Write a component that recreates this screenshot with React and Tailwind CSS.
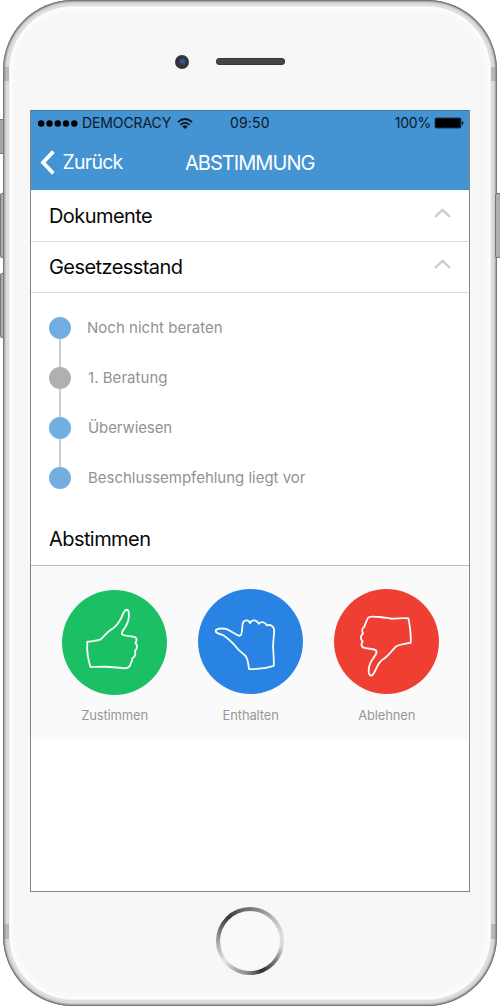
import React from "react";

const stages = [
  { label: "Noch nicht beraten", dot: "bg-[#72aedf]", text: "ml-[16px] tracking-[0.02px]" },
  { label: "1. Beratung", dot: "bg-[#b0b0b0]", text: "ml-[17px] tracking-[0.04px]" },
  { label: "Überwiesen", dot: "bg-[#72aedf]", text: "ml-[17px] tracking-[-0.1px]" },
  { label: "Beschlussempfehlung liegt vor", dot: "bg-[#72aedf]", text: "ml-[17px] tracking-[-0.02px]" },
];

const votes = [
  {
    label: "Zustimmen",
    color: "bg-[#1bc064]",
    box: "mt-[1px]",
    viewBox: "38 29 313 313",
    d: "M114 184 C130 182 142 182 154 177 C168 163 177 150 192 143 C207 133 216 113 223 96 C228 86 236 85 238 96 C240 111 237 125 228 139 C221 150 213 158 219 163 C229 168 244 166 257 170 C263 173 262 183 258 188 C265 195 264 205 257 211 C259 221 256 230 249 233 C250 241 244 246 243 252 C240 262 234 265 220 263 C196 261 179 258 158 259 C145 260 134 259 123 259 C117 239 112 205 114 184 Z",
  },
  {
    label: "Enthalten",
    color: "bg-[#2983e3]",
    box: "mt-0",
    viewBox: "40 26 313 313",
    d: "M93 151 C94 145 108 143 121 145 C138 149 151 164 164 166 C174 165 171 149 173 137 C173 124 177 120 185 120 C191 120 194 123 196 128 C201 117 215 117 222 130 C230 122 242 125 246 135 C255 132 267 136 268 148 C269 165 264 181 265 202 C266 221 268 239 267 256 C243 264 218 267 193 266 C190 251 190 232 181 225 C166 214 155 203 146 190 C135 179 130 174 118 166 C107 160 91 160 93 151 Z",
  },
  {
    label: "Ablehnen",
    color: "bg-[#ee3f32]",
    box: "mt-0",
    viewBox: "43 26 313 313",
    d: "M266 114 C270 135 274 161 273 187 C257 190 241 191 229 198 C213 214 203 229 188 238 C173 248 169 269 161 280 C156 289 148 286 147 275 C146 258 151 246 160 234 C167 223 175 216 168 209 C157 204 143 206 130 201 C123 197 125 187 129 183 C122 177 121 165 130 160 C126 152 127 143 134 139 C136 131 137 130 142 119 C144 109 151 108 165 109 C184 109 200 113 216 115 C235 115 250 112 266 114 Z",
  },
];

function Wifi() {
  return (
    <svg className="ml-[6px] h-[11px] w-[16px] shrink-0" viewBox="0 0 16 11" fill="none" stroke="#071521" strokeWidth="1.7">
      <path d="M.9 4.1Q8-2.1 15.1 4.1" />
      <path d="M3.4 6.8Q8 2.9 12.6 6.8" />
      <path d="M5.3 8.5Q8 6.2 10.7 8.5L8 11Z" fill="#071521" stroke="none" />
    </svg>
  );
}

function StatusBar() {
  return (
    <div className="flex h-[24px] items-center pl-[7px] pr-[5px] text-[14px] leading-none text-[#0b1a27]">
      <svg className="h-[7px] w-[40px] shrink-0" viewBox="0 0 40 7" fill="#000">
        <circle cx="3.2" cy="3.5" r="3.2" />
        <circle cx="11.5" cy="3.5" r="3.2" />
        <circle cx="19.8" cy="3.5" r="3.2" />
        <circle cx="28" cy="3.5" r="3.2" />
        <circle cx="36.3" cy="3.5" r="3.2" />
      </svg>
      <span className="ml-[4px] w-[89px] tracking-[-0.1px]">DEMOCRACY</span>
      <Wifi />
      <span className="ml-[37px] tracking-[0.15px]">09:50</span>
      <span className="ml-auto tracking-[-0.2px]">100%</span>
      <svg className="ml-[3px] h-[12px] w-[30px] shrink-0" viewBox="0 0 30 12">
        <rect x=".5" y=".5" width="27" height="11" rx="2" fill="#163a58" />
        <rect x="1.5" y="1.5" width="25" height="9" rx="1" fill="#000" />
        <path d="M28 4q1.5.5 1.5 2T28 8z" fill="#071521" />
      </svg>
    </div>
  );
}

function SectionRow({ title, className }) {
  return (
    <div className={"flex items-center justify-between px-[18px] text-[20px] leading-none text-[#080808] " + className}>
      <h2 className="tracking-[-0.57px]">{title}</h2>
      <svg className="mb-[6px] h-[10px] w-[17px]" viewBox="0 0 17 10" fill="none" stroke="#cbcbce" strokeWidth="2.3">
        <path d="M1 9L8.5 1.8L16 9" />
      </svg>
    </div>
  );
}

function Screen() {
  return (
    <div className="mx-[27px] flex h-[782px] flex-col border border-[#858585] bg-white">
      <header className="-mt-px h-[80px] shrink-0 border-t border-[#447299] bg-[#4493d3]">
        <StatusBar />
        <div className="flex h-[55px] items-center pl-[9px] text-[20px] leading-none text-white">
          <svg className="h-[25px] w-[15px]" viewBox="0 0 15 25" fill="none" stroke="white" strokeWidth="3.8">
            <path d="M13.3 1.6L3 12.5L13.3 23.4" />
          </svg>
          <span className="ml-[7.5px] w-[122.5px] text-[19.5px] tracking-[-0.75px]">Zurück</span>
          <h1 className="tracking-[-0.95px]">ABSTIMMUNG</h1>
        </div>
      </header>
      <SectionRow title="Dokumente" className="h-[52px] shrink-0 border-b border-[#dadada]" />
      <SectionRow title="Gesetzesstand" className="h-[51px] shrink-0 border-b border-[#d9d9d9]" />
      <ul className="flex h-[220px] shrink-0 flex-col pl-[18px] pt-[23.5px]">
        {stages.map((s, i) => (
          <li key={s.label} className="flex h-[50.3px] shrink-0 text-[15px] leading-[22px] text-[#929295]">
            <div className="flex w-[22px] flex-col items-center">
              <span className={"size-[22px] shrink-0 rounded-full " + s.dot} />
              {i < 3 && <span className="w-[1.5px] grow bg-[#cecece]" />}
            </div>
            <span className={s.text}>{s.label}</span>
          </li>
        ))}
      </ul>
      <h2 className="flex h-[53px] shrink-0 items-center border-b border-[#bdbdbd] pl-[18px] text-[20px] leading-none tracking-[-0.57px] text-[#080808]">
        Abstimmen
      </h2>
      <section className="flex h-[173px] shrink-0 justify-between bg-[#fafafa] pl-[31.3px] pr-[30px] pt-[23px]">
        {votes.map((v) => (
          <div key={v.label} className="flex h-[137px] w-[104.5px] flex-col items-center">
            <button className={"size-[104.5px] shrink-0 rounded-full " + v.color + " " + v.box}>
              <svg className="size-full" viewBox={v.viewBox} fill="none" stroke="#f4fbf8" strokeWidth="5.5" strokeLinejoin="round">
                <path d={v.d} />
              </svg>
            </button>
            <span className="mt-auto text-[13px] leading-[22px] tracking-[-0.15px] text-[#98989b]">{v.label}</span>
          </div>
        ))}
      </section>
    </div>
  );
}

export default function App() {
  return (
    <div className="relative h-[1008px] w-[500px] overflow-hidden bg-white font-['Inter',sans-serif]">
      <i className="absolute left-0 top-[119px] h-[35px] w-[5px] border-y border-[#77777a] bg-[#a5a5a8]" />
      <i className="absolute left-0 top-[193px] h-[65px] w-[6px] rounded-l-[2px] border border-[#77777a] bg-[#aeaeb2]" />
      <i className="absolute left-0 top-[273px] h-[65px] w-[6px] rounded-l-[2px] border border-[#77777a] bg-[#aeaeb2]" />
      <div className="relative mx-[3px] h-[1006px] rounded-[70px] bg-[#f7f7f7] shadow-[inset_0_0_0_1px_#77787a,inset_0_0_2px_2px_#98999b,inset_0_0_0_6px_#dcdde0,inset_0_0_0_7px_#f1f1f2,inset_0_0_0_8px_#ffffff,inset_0_0_5px_10px_#fcfcfc]">
        <i className="absolute left-px top-[67px] h-[14px] w-[5px] bg-[#77777a]/35" />
        <i className="absolute right-px top-[67px] h-[14px] w-[5px] bg-[#77777a]/35" />
        <i className="absolute left-px top-[924px] h-[15px] w-[5px] bg-[#77777a]/35" />
        <i className="absolute right-px top-[924px] h-[15px] w-[5px] bg-[#77777a]/35" />
        <div className="flex h-[110px] items-center pl-[172px] pt-[13px]">
          <span className="flex size-[14px] items-center justify-center rounded-full bg-[#343436]">
            <span className="size-[7px] rounded-full bg-[radial-gradient(#4860a3,#202b58)]" />
          </span>
          <span className="ml-[27px] h-[7px] w-[69px] rounded-[3px] border border-[#363638] bg-[#454547]" />
        </div>
        <Screen />
        <div className="flex justify-center pt-[15px]">
          <div className="size-[68px] rounded-full bg-[conic-gradient(#747577,#b8b9ba_45deg,#dededf_80deg,#d7d7d8_100deg,#77787a_130deg,#303032_158deg,#8b8b8d_185deg,#aaaaab_205deg,#e7e7e8_232deg,#a1a1a3_270deg,#68696b_295deg,#39393b_318deg,#68696b_345deg,#747577)] p-[4px]">
            <div className="size-full rounded-full bg-[#f9f9f9]" />
          </div>
        </div>
      </div>
      <i className="absolute left-[495px] top-[193px] h-[65px] w-[6px] rounded-[2px] border border-[#77777a] bg-[#aeaeb2]" />
    </div>
  );
}
